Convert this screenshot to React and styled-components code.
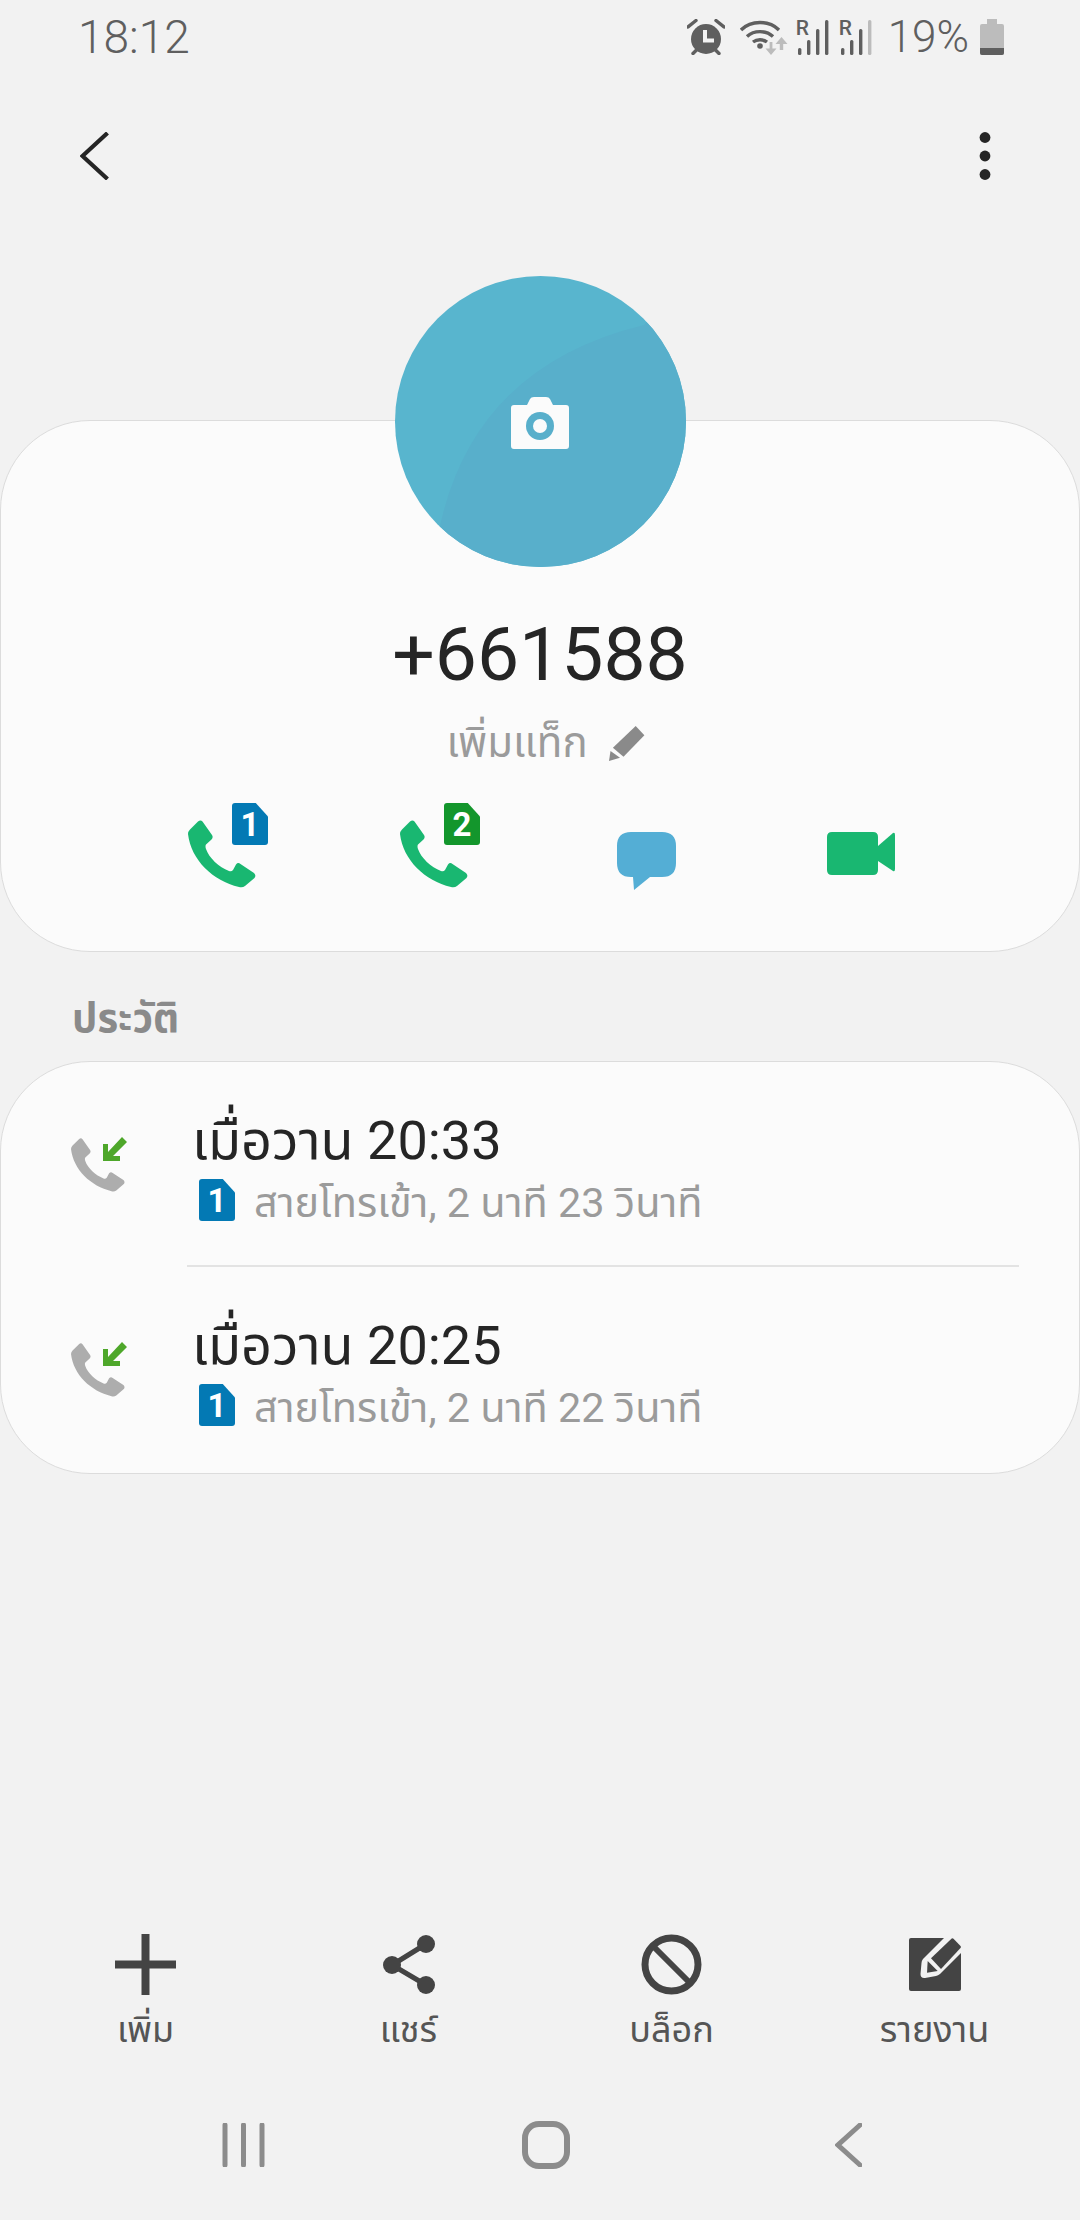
import React from "react";
import styled, { createGlobalStyle } from "styled-components";

const GlobalStyle = createGlobalStyle`
  html, body {
    margin: 0;
    padding: 0;
    background-color: #f2f2f2;
  }
  * {
    box-sizing: border-box;
  }
`;

const FONT = `Roboto, "Noto Sans", "Noto Sans Thai", "DejaVu Sans", sans-serif`;

const Page = styled.div`
  width: 1080px;
  height: 2220px;
  background-color: #f2f2f2;
  font-family: ${FONT};
  display: flex;
  flex-direction: column;
  overflow: hidden;
`;

const StatusBar = styled.div`
  height: 74px;
  padding: 0 76px 0 78px;
  display: flex;
  align-items: center;
  justify-content: space-between;
  color: #5f5f5f;
  font-size: 46px;
  font-weight: 300;
`;
const StatusIcons = styled.div`
  display: flex;
  align-items: center;
`;
const StatusIcon = styled.svg`
  display: block;
  margin-left: ${(props) => props.$gap || 0}px;
`;
const SignalBox = styled.div`
  position: relative;
  width: 33px;
  height: 37px;
  margin-left: ${(props) => props.$gap}px;
`;
const RoamingLabel = styled.span`
  position: absolute;
  left: 0;
  top: 0;
  font-size: 21px;
  font-weight: 500;
  line-height: 19px;
`;
const Battery = styled.span`
  font-size: 44px;
  margin: 0 11px 0 16px;
`;

const TopBar = styled.div`
  height: 346px;
  padding: 58px 89px 0 80px;
  display: flex;
  align-items: flex-start;
  justify-content: space-between;
`;

const Card = styled.div`
  background-color: #fbfbfb;
  border: 1.5px solid #dcdcdc;
  border-radius: 90px;
`;
const ProfileCard = styled(Card)`
  height: 532px;
  display: flex;
  flex-direction: column;
  align-items: center;
`;
const Avatar = styled.div`
  width: 291px;
  height: 291px;
  margin-top: -145px;
  border-radius: 50%;
  background-color: #58b5ce;
  overflow: hidden;
  position: relative;
  display: flex;
  align-items: center;
  justify-content: center;
  flex-shrink: 0;
`;
const AvatarShade = styled.svg`
  position: absolute;
  inset: 0;
`;
const CameraIcon = styled.svg`
  position: relative;
  margin-top: 2px;
`;
const PhoneNumber = styled.div`
  font-size: 75px;
  line-height: 86px;
  color: #252525;
  margin-top: 44px;
`;
const TagRow = styled.div`
  margin: 23px 0 0 11px;
  height: 48px;
  display: flex;
  align-items: center;
  gap: 21px;
  font-size: 42px;
  color: #9b9b9b;
`;
const Actions = styled.div`
  width: 100%;
  margin-top: 31px;
  padding-left: 187px;
  display: flex;
  align-items: flex-start;
`;
const CallAction = styled.div`
  width: ${(props) => props.$width || 212}px;
  height: 90px;
  position: relative;
  flex-shrink: 0;
  padding-top: 21px;
`;
const SimBadge = styled.div`
  width: 36px;
  height: 42px;
  flex-shrink: 0;
  background-color: ${(props) => props.$color};
  border-radius: 3px;
  clip-path: polygon(0 0, 66% 0, 100% 32%, 100% 100%, 0 100%);
  color: #fff;
  font-family: Roboto, sans-serif;
  font-size: 33px;
  font-weight: 700;
  line-height: 43px;
  text-align: center;
`;
const FloatingSim = styled(SimBadge)`
  position: absolute;
  left: 44px;
  top: 4px;
`;
const ActionIcon = styled.svg`
  display: block;
  margin-top: ${(props) => props.$top || 0}px;
  margin-left: ${(props) => props.$left || 0}px;
`;

const SectionTitle = styled.div`
  font-size: 40px;
  font-weight: 700;
  color: #8a8a8a;
  margin: 34px 0 0 72px;
  height: 75px;
  line-height: 66px;
`;

const HistoryCard = styled(Card)`
  height: 413px;
  padding-top: 49px;
`;
const HistoryRow = styled.div`
  display: flex;
  height: 154px;
  padding-left: 70px;
`;
const CallIconBox = styled.div`
  position: relative;
  width: 56px;
  height: 54px;
  margin-top: 27px;
  flex-shrink: 0;
`;
const InArrow = styled.svg`
  position: absolute;
  right: 0;
  top: -1px;
`;
const RowText = styled.div`
  margin-left: 65px;
`;
const RowTitle = styled.div`
  font-size: 54px;
  line-height: 60px;
  color: #252525;
`;
const RowSub = styled.div`
  display: flex;
  align-items: center;
  gap: 19px;
  margin: 8px 0 0 7px;
  font-size: 41.4px;
  line-height: 48px;
  color: #9b9b9b;
`;
const RowSim = styled(SimBadge)`
  margin-top: -6px;
`;
const Divider = styled.div`
  height: 2px;
  margin: 0 60px 49px 186px;
  background-color: #e3e3e3;
`;

const Spacer = styled.div`
  flex: 1;
`;

const BottomActions = styled.div`
  display: grid;
  grid-template-columns: repeat(4, 263px);
  padding-left: 14px;
`;
const BottomAction = styled.div`
  display: flex;
  flex-direction: column;
  align-items: center;
  color: #555;
  font-size: 36px;
  line-height: 46px;
`;
const BottomIconBox = styled.div`
  height: 61px;
  display: flex;
  align-items: center;
  margin-bottom: 12px;
`;

const NavBar = styled.div`
  height: 51px;
  margin: 66px 0 50px;
  display: grid;
  grid-template-columns: 222px 43px 257px 48px 265px 27px;
  align-items: center;
`;
const NavSlot = styled.div`
  grid-column: ${(props) => props.$col};
  display: flex;
  justify-content: center;
`;

const PHONE =
  "M10 1.5Q12.5-.7 14.5 1.5L24 15Q25.5 17.5 23.5 19.5L18 24.5Q17 26 18 29C21 38 31 47 41 51Q43.5 52 45 50L48 44.5Q50 42 52.5 44L66 53Q68.5 55.5 66.5 58L57 66Q54.5 68 51 67C25 61 3 40 0 14Q0 11.5 2 9.5Z";

const PhoneGlyph = ({ size, color }) => (
  <ActionIcon width={size} height={size} viewBox="0 0 68 68">
    <path d={PHONE} fill={color} />
  </ActionIcon>
);

const AlarmIcon = () => (
  <StatusIcon width="38" height="36" viewBox="0 0 38 36">
    <circle cx="19" cy="20" r="15" fill="#5f5f5f" />
    <path d="M1 8L9 1.5M37 8L29 1.5M6 34.5L9.5 31M32 34.5L28.5 31" stroke="#5f5f5f" strokeWidth="3.4" strokeLinecap="round" fill="none" />
    <path d="M18 11V21.5H27" stroke="#f2f2f2" strokeWidth="4" fill="none" />
  </StatusIcon>
);

const WifiIcon = () => (
  <StatusIcon $gap={15} width="48" height="37" viewBox="0 0 48 37">
    <path d="M1 11C11 1 29 1 39 11M7 17.5C14 11 26 11 33 17.5M13 23C17 20 23 20 27 23" stroke="#5f5f5f" strokeWidth="3.4" fill="none" />
    <circle cx="20" cy="27" r="2.8" fill="#5f5f5f" />
    <path d="M31 36L25.5 29.5H29.6V23H32.4V29.5H36.5Z" fill="#bcbcbc" />
    <path d="M41.5 18L47.5 25H43.2V31H39.8V25H35.5Z" fill="#bcbcbc" />
  </StatusIcon>
);

const SignalIcon = ({ last, gap }) => (
  <SignalBox $gap={gap}>
    <RoamingLabel>R</RoamingLabel>
    <StatusIcon width="33" height="37" viewBox="0 0 33 37">
      <rect x="2" y="29" width="3.4" height="7" rx="1.5" fill="#5f5f5f" />
      <rect x="11" y="21" width="3.4" height="15" rx="1.5" fill="#5f5f5f" />
      <rect x="20" y="10" width="3.4" height="26" rx="1.5" fill="#5f5f5f" />
      <rect x="29" y="1" width="3.4" height="35" rx="1.5" fill={last ? "#bcbcbc" : "#5f5f5f"} />
    </StatusIcon>
  </SignalBox>
);

const BatteryIcon = () => (
  <StatusIcon width="24" height="36" viewBox="0 0 24 36">
    <path d="M7 0H17V5H22Q24 5 24 7V34Q24 36 22 36H2Q0 36 0 34V7Q0 5 2 5H7Z" fill="#bcbcbc" />
    <path d="M0 29H24V34Q24 36 22 36H2Q0 36 0 34Z" fill="#5f5f5f" />
  </StatusIcon>
);

const historyRows = [
  { time: "เมื่อวาน 20:33", detail: "สายโทรเข้า, 2 นาที 23 วินาที" },
  { time: "เมื่อวาน 20:25", detail: "สายโทรเข้า, 2 นาที 22 วินาที" },
];

const App = () => {
  return (
    <Page>
      <GlobalStyle />
      <StatusBar>
        <span>18:12</span>
        <StatusIcons>
          <AlarmIcon />
          <WifiIcon />
          <SignalIcon gap={8} />
          <SignalIcon gap={10} last />
          <Battery>19%</Battery>
          <BatteryIcon />
        </StatusIcons>
      </StatusBar>

      <TopBar>
        <svg width="30" height="48" viewBox="0 0 30 48">
          <path d="M27.5 1L2.5 24L27.5 47" stroke="#252525" strokeWidth="4.2" fill="none" />
        </svg>
        <svg width="12" height="48" viewBox="0 0 12 48">
          <circle cx="6" cy="5.5" r="5.4" fill="#252525" />
          <circle cx="6" cy="24" r="5.4" fill="#252525" />
          <circle cx="6" cy="42.5" r="5.4" fill="#252525" />
        </svg>
      </TopBar>

      <ProfileCard>
        <Avatar>
          <AvatarShade width="291" height="291" viewBox="0 0 291 291">
            <path d="M45 250Q80 90 249 49L291 0V291H0Z" fill="#58afcb" />
          </AvatarShade>
          <CameraIcon width="58" height="52" viewBox="0 0 58 52">
            <path d="M3 8H16L19 2Q20 0 23 0H35Q38 0 39 2L42 8H55Q58 8 58 11V49Q58 52 55 52H3Q0 52 0 49V11Q0 8 3 8Z" fill="#fbfbfb" />
            <circle cx="29" cy="29" r="14" fill="#58afcb" />
            <circle cx="29" cy="29" r="7" fill="#fbfbfb" />
          </CameraIcon>
        </Avatar>
        <PhoneNumber>+661588</PhoneNumber>
        <TagRow>
          <span>เพิ่มแท็ก</span>
          <svg width="36" height="36" viewBox="0 0 36 36">
            <path d="M26.7 0L35.4 9.3L14.5 30.7L3.9 21.7Z" fill="#8a8a8a" />
            <path d="M1.5 25L11 31.7L0 35Z" fill="#8a8a8a" />
          </svg>
        </TagRow>
        <Actions>
          <CallAction>
            <PhoneGlyph size={68} color="#19b771" />
            <FloatingSim $color="#0379b4">1</FloatingSim>
          </CallAction>
          <CallAction>
            <PhoneGlyph size={68} color="#19b771" />
            <FloatingSim $color="#13962c">2</FloatingSim>
          </CallAction>
          <CallAction $width={209}>
            <ActionIcon $top={12} $left={5} width="59" height="58" viewBox="0 0 59 58">
              <path d="M14 0H45Q59 0 59 14V31Q59 45 45 45H33L17 58L16 45H14Q0 45 0 31V14Q0 0 14 0Z" fill="#54aed5" />
            </ActionIcon>
          </CallAction>
          <CallAction>
            <ActionIcon $top={12} $left={6} width="68" height="43" viewBox="0 0 68 43">
              <path d="M5 0H46Q51 0 51 5V38Q51 43 46 43H5Q0 43 0 38V5Q0 0 5 0Z" fill="#19b771" />
              <path d="M51 14L66 1Q68 0 68 3V37Q68 40 66 39L51 29Z" fill="#19b771" />
            </ActionIcon>
          </CallAction>
        </Actions>
      </ProfileCard>

      <SectionTitle>ประวัติ</SectionTitle>

      <HistoryCard>
        {historyRows.map((row, i) => (
          <React.Fragment key={row.time}>
            {i > 0 && <Divider />}
            <HistoryRow>
              <CallIconBox>
                <PhoneGlyph size={54} color="#adadad" />
                <InArrow width="24" height="24" viewBox="0 0 24 24">
                  <path d="M0 24V7H5V15L19 0L24 5L10 19H17V24Z" fill="#4ea72a" />
                </InArrow>
              </CallIconBox>
              <RowText>
                <RowTitle>{row.time}</RowTitle>
                <RowSub>
                  <RowSim $color="#0379b4">1</RowSim>
                  <span>{row.detail}</span>
                </RowSub>
              </RowText>
            </HistoryRow>
          </React.Fragment>
        ))}
      </HistoryCard>

      <Spacer />

      <BottomActions>
        <BottomAction>
          <BottomIconBox>
            <svg width="61" height="61" viewBox="0 0 61 61">
              <path d="M26.5 0H34.5V61H26.5ZM0 26.5H61V34.5H0Z" fill="#444" />
            </svg>
          </BottomIconBox>
          เพิ่ม
        </BottomAction>
        <BottomAction>
          <BottomIconBox>
            <svg width="52" height="61" viewBox="0 0 52 61">
              <path d="M43 10L9 31L43 51" stroke="#444" strokeWidth="5" fill="none" />
              <circle cx="43" cy="10" r="9" fill="#444" />
              <circle cx="9" cy="31" r="9" fill="#444" />
              <circle cx="43" cy="51" r="9" fill="#444" />
            </svg>
          </BottomIconBox>
          แชร์
        </BottomAction>
        <BottomAction>
          <BottomIconBox>
            <svg width="61" height="61" viewBox="0 0 61 61">
              <circle cx="30.5" cy="30.5" r="26.5" stroke="#444" strokeWidth="7" fill="none" />
              <path d="M13 13L48 48" stroke="#444" strokeWidth="6" />
            </svg>
          </BottomIconBox>
          บล็อก
        </BottomAction>
        <BottomAction>
          <BottomIconBox>
            <svg width="52" height="53" viewBox="0 0 52 53">
              <path d="M2 0H50Q52 0 52 2V51Q52 53 50 53H2Q0 53 0 51V2Q0 0 2 0Z" fill="#444" />
              <path d="M35 0L14 21Q12.5 23 12.5 25L11.5 36Q11.5 40.5 16 40L27 38Q29 37.7 31 36L52 15V0Z" fill="#f2f2f2" />
              <path d="M42.7 .5Q43.5 0 44.5 .8L51.5 8Q52.3 9 51.5 10L32 31L22 20.3Z" fill="#444" />
              <path d="M18.7 23L28.7 33L18 34.7Z" fill="#444" />
            </svg>
          </BottomIconBox>
          รายงาน
        </BottomAction>
      </BottomActions>

      <NavBar>
        <NavSlot $col={2}>
          <svg width="43" height="44" viewBox="0 0 43 44">
            <path d="M3 2V42M21.5 2V42M40 2V42" stroke="#8c8c8c" strokeWidth="5" strokeLinecap="round" />
          </svg>
        </NavSlot>
        <NavSlot $col={4}>
          <svg width="48" height="48" viewBox="0 0 48 48">
            <rect x="3" y="3" width="42" height="42" rx="14" stroke="#8c8c8c" strokeWidth="6" fill="none" />
          </svg>
        </NavSlot>
        <NavSlot $col={6}>
          <svg width="27" height="44" viewBox="0 0 27 44">
            <path d="M25 2L3 22L25 42" stroke="#8c8c8c" strokeWidth="5" strokeLinecap="round" fill="none" />
          </svg>
        </NavSlot>
      </NavBar>
    </Page>
  );
};

export default App;
